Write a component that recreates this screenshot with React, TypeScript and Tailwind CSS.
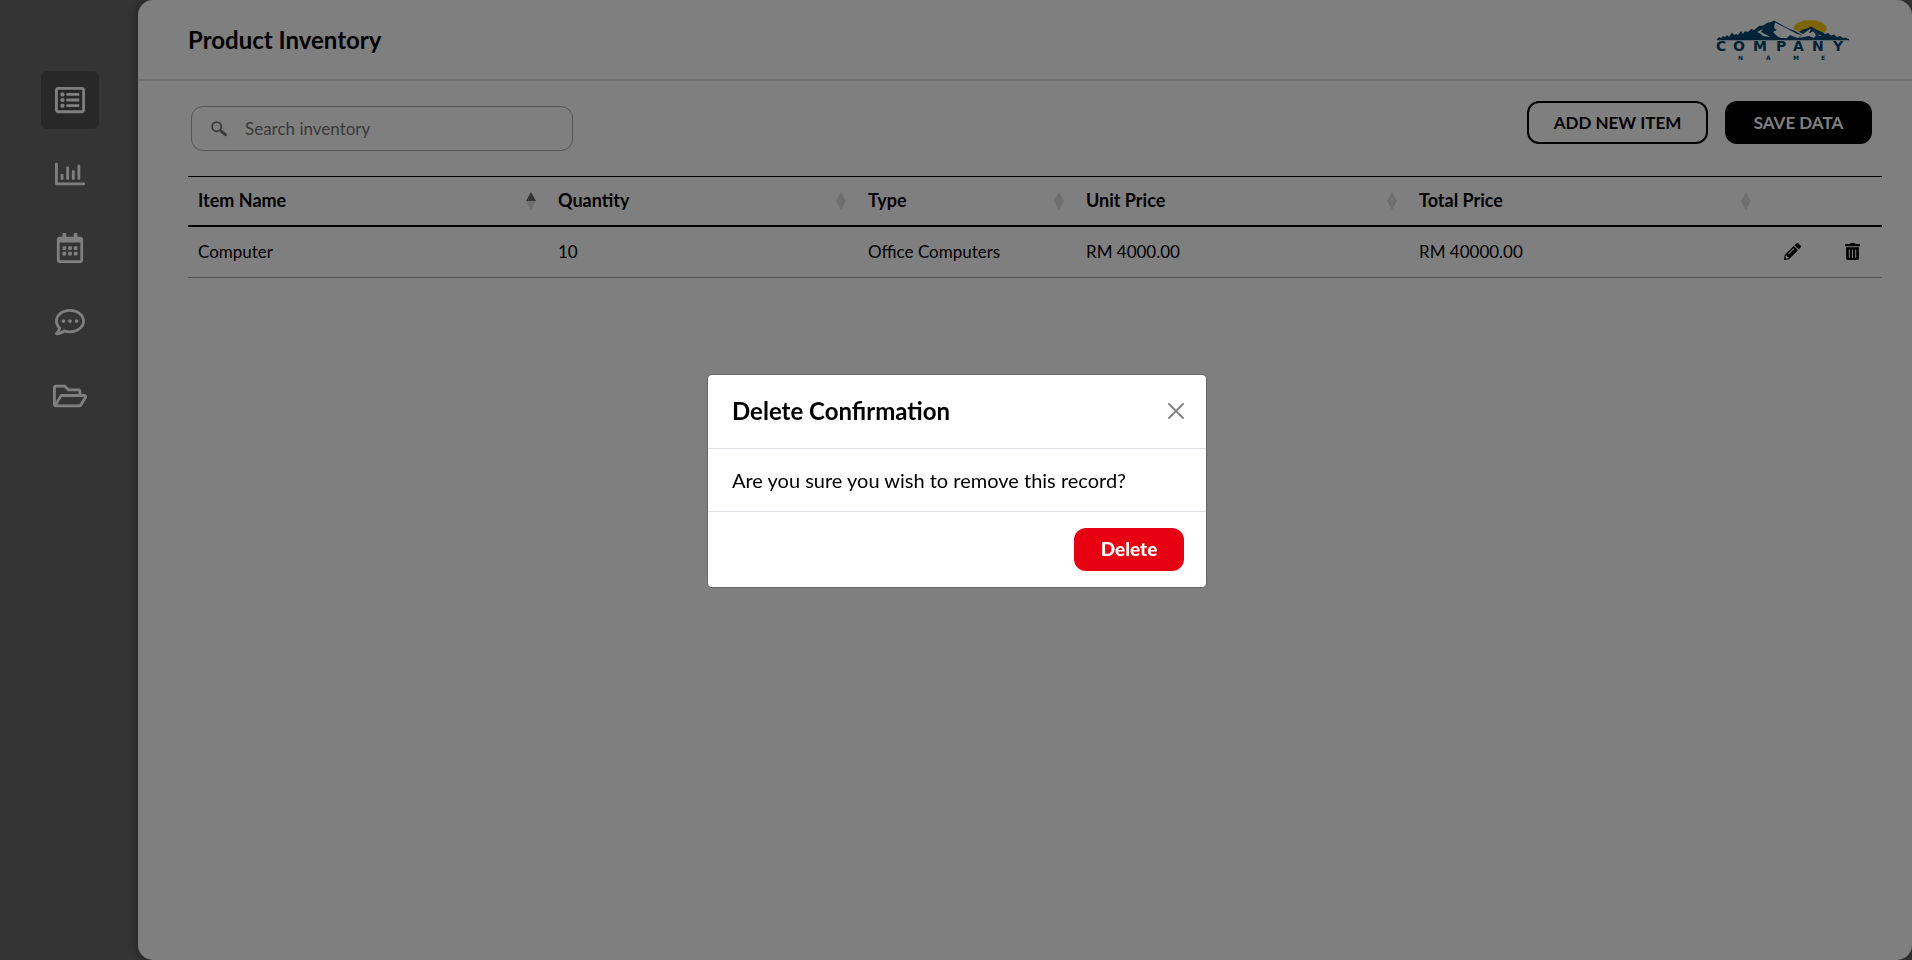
import React from "react";
import {
  FaPencilAlt,
  FaRegCalendarAlt,
  FaRegChartBar,
  FaRegCommentDots,
  FaRegFolderOpen,
  FaRegListAlt,
  FaTrashAlt,
} from "react-icons/fa";

const navItems = [
  { label: "Inventory", icon: <FaRegListAlt className="size-[30px]" />, active: true },
  { label: "Reports", icon: <FaRegChartBar className="size-[30px]" />, active: false },
  { label: "Calendar", icon: <FaRegCalendarAlt className="size-[30px]" />, active: false },
  { label: "Messages", icon: <FaRegCommentDots className="size-[30px]" />, active: false },
  { label: "Files", icon: <FaRegFolderOpen className="size-[34px]" />, active: false },
];

const columns = [
  { title: "Item Name", width: "w-[21.25%]", sorted: true },
  { title: "Quantity", width: "w-[18.3%]", sorted: false },
  { title: "Type", width: "w-[12.87%]", sorted: false },
  { title: "Unit Price", width: "w-[19.66%]", sorted: false },
  { title: "Total Price", width: "w-[20.9%]", sorted: false },
];

const rows = [
  {
    name: "Computer",
    quantity: "10",
    type: "Office Computers",
    unit: "RM 4000.00",
    total: "RM 40000.00",
  },
];

function Logo() {
  return (
    <svg viewBox="0 0 136 42" className="h-[42px] w-[136px]" role="img" aria-label="Company Name">
      <ellipse cx="95" cy="9.5" rx="16.5" ry="8.5" fill="#fcca08" />
      <path
        d="M2 21 L4 18 L6 19 L8 17 L10 18 L12 16 L14 18 L17 13.5 L19 16 L21 15 L23 16 L26 12 L28 15 L30 12 L33 13 L36 10 L39 11 L44 7 L48 6.5 L52 4 L56 3 L59 1.5 L64 4 L69 7 L73 9 L78 12 L83 13.5 L88 10.5 L92 9.5 L96 7.5 L101 10.5 L107 13 L110 15 L113 14 L116 16.5 L119 15.5 L122 18 L125 17 L128 19 L131 18.5 L134 21 Z"
        fill="#00466f"
      />
      <path d="M60 3.5 L69 8 L79 13 L87 16 L83 19 L77 17 L79 19 L66 19 L62 17 L58 13 L62 11 L59 9 Z" fill="#fff" />
      <path d="M61 2.5 L71 6 L84 13 L88 15 L92 12 L96 9.5 L94 14 L99 12 L107 17 L101 16 L99 19 L94 17 L84 19 L87 16 L78 12 Z" fill="#fff" />
      <path d="M71 8.5 L80 12 L87 16 L82 15 Z M72 19 L75 16 L81 19 Z M96 10 L95 14 L98 12 L101 16 L105 16 Z" fill="#00466f" />
      <path d="M42 13 L48 10 L46 13 L52 16 L55 18 L48 17 L46 15 Z" fill="#fff" />
      <path d="M2 20.5 H134" stroke="#00466f" strokeWidth="1.5" />
      <text
        x="1 18 38 61 78 97 118"
        y="32"
        fill="#00466f"
        className="font-['DejaVu_Sans'] text-[14px] font-bold"
      >
        COMPANY
      </text>
      <text
        x="23 51 78 106"
        y="41"
        fill="#00466f"
        className="font-['DejaVu_Sans'] text-[6px] font-bold"
      >
        NAME
      </text>
    </svg>
  );
}

function SortMark({ sorted }: { sorted: boolean }) {
  return (
    <svg viewBox="0 0 10 18" className="h-[18px] w-[10px]" aria-hidden="true">
      <path d="M5 0 L10 9 H0 Z" fill={sorted ? "#666" : "#dedede"} />
      <path d="M5 18 L0 9 H10 Z" fill="#dedede" />
    </svg>
  );
}

function Sidebar() {
  return (
    <nav className="flex w-[138px] shrink-0 flex-col items-center gap-4 pt-[71px] pl-[2px]">
      {navItems.map((item) => (
        <a
          key={item.label}
          href="#"
          aria-label={item.label}
          className={
            item.active
              ? "flex size-[58px] items-center justify-center rounded-md bg-[#505050] text-white"
              : "flex size-[58px] items-center justify-center rounded-md text-white"
          }
        >
          {item.icon}
        </a>
      ))}
    </nav>
  );
}

function InventoryTable() {
  return (
    <table className="w-full table-fixed border-collapse text-left text-black">
      <thead>
        <tr className="h-[49px] border-t border-b-2 border-black">
          {columns.map((column) => (
            <th key={column.title} className={`${column.width} pr-3 pl-[10px] text-[18px] font-bold`}>
              <div className="flex items-center justify-between">
                {column.title}
                <SortMark sorted={column.sorted} />
              </div>
            </th>
          ))}
          <th aria-label="Edit" />
          <th aria-label="Delete" />
        </tr>
      </thead>
      <tbody>
        {rows.map((row) => (
          <tr key={row.name} className="h-[52px] border-b border-[#aaa] text-[17px]">
            <td className="pl-[10px]">{row.name}</td>
            <td className="pl-[10px]">{row.quantity}</td>
            <td className="pl-[10px]">{row.type}</td>
            <td className="pl-[10px]">{row.unit}</td>
            <td className="pl-[10px]">{row.total}</td>
            <td>
              <button type="button" aria-label="Edit item" className="mx-auto block">
                <FaPencilAlt className="size-[17px]" />
              </button>
            </td>
            <td>
              <button type="button" aria-label="Delete item" className="mx-auto block">
                <FaTrashAlt className="size-[17px]" />
              </button>
            </td>
          </tr>
        ))}
      </tbody>
    </table>
  );
}

function DeleteDialog() {
  return (
    <div className="fixed inset-0 flex items-center justify-center bg-black/50 pt-[2px] pl-[2px]">
      <section
        role="dialog"
        aria-modal="true"
        aria-labelledby="dialog-title"
        className="w-full max-w-[500px] rounded-[5px] border border-black/20 bg-white bg-clip-padding text-black"
      >
        <header className="flex h-[74px] items-center justify-between border-b border-[#dee2e6] pr-[22px] pb-[2px] pl-6">
          <h2 id="dialog-title" className="text-2xl font-bold">
            Delete Confirmation
          </h2>
          <button type="button" aria-label="Close" className="text-[#808080]">
            <svg viewBox="0 0 16 16" className="size-4" aria-hidden="true">
              <path d="M1 1 L15 15 M15 1 L1 15" stroke="currentColor" strokeWidth="1.8" strokeLinecap="round" />
            </svg>
          </button>
        </header>
        <p className="flex h-[62px] items-center px-6 text-[20px]">
          Are you sure you wish to remove this record?
        </p>
        <footer className="flex h-[76px] items-center justify-end border-t border-[#dee2e6] pr-[22px]">
          <button
            type="button"
            className="h-[43px] w-[110px] rounded-xl bg-[#e60012] text-[19px] font-black text-white"
          >
            Delete
          </button>
        </footer>
      </section>
    </div>
  );
}

export default function App() {
  return (
    <div className="flex min-h-screen bg-[#686868] font-[Lato,'Open_Sans',sans-serif]">
      <Sidebar />
      <main className="flex-1 rounded-[15px] bg-white shadow-[0_0_10px_rgba(0,0,0,0.4)]">
        <header className="flex h-[81px] items-center justify-between border-b-2 border-[#e0e0e0] pr-[61px] pl-[50px]">
          <h1 className="text-2xl font-bold text-black">Product Inventory</h1>
          <Logo />
        </header>
        <div className="pr-[30px] pl-[50px]">
          <div className="flex items-start justify-between pt-5 pr-[10px] pl-[3px]">
            <label className="mt-[5px] mb-[25px] flex h-[45px] w-[382px] items-center gap-[18px] rounded-xl border border-[#aaa] pl-[19px]">
              <svg viewBox="0 0 16 16" className="size-4" aria-hidden="true">
                <circle cx="5.7" cy="5.7" r="4.6" fill="none" stroke="#757575" strokeWidth="1.8" />
                <path d="M9 9 L10.5 10.5" stroke="#757575" strokeWidth="1.8" />
                <path d="M10.5 10.3 L14.3 13.7" stroke="#757575" strokeWidth="3" strokeLinecap="round" />
              </svg>
              <input
                type="search"
                aria-label="Search inventory"
                placeholder="Search inventory"
                className="min-w-0 flex-1 bg-transparent text-[17px] outline-none placeholder:text-[#757575]"
              />
            </label>
            <div className="flex gap-[17px] text-[17px] font-bold">
              <button type="button" className="h-[43px] w-[181px] rounded-xl border-2 border-black text-black">
                ADD NEW ITEM
              </button>
              <button type="button" className="h-[43px] w-[147px] rounded-xl bg-black text-white">
                SAVE DATA
              </button>
            </div>
          </div>
          <InventoryTable />
        </div>
      </main>
      <DeleteDialog />
    </div>
  );
}
